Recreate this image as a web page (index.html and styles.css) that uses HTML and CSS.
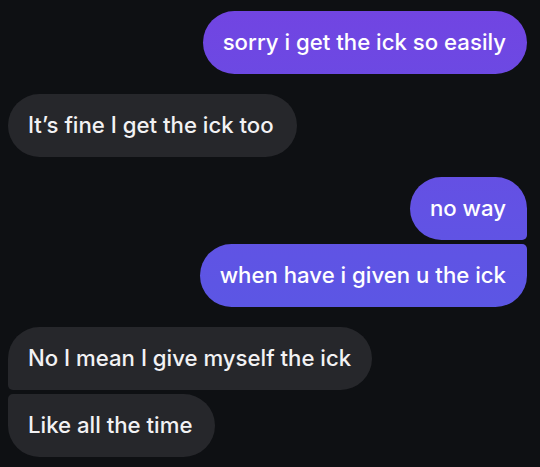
FILE: index.html
```html
<!DOCTYPE html>
<html>
<head>
<meta charset="utf-8">
<link rel="stylesheet" href="styles.css">
</head>
<body>
<div class="chat">
  <div class="group out">
    <div class="bubble">sorry i get the ick so easily</div>
  </div>
  <div class="group in">
    <div class="bubble">It’s fine I get the ick too</div>
  </div>
  <div class="group out">
    <div class="bubble first">no way</div>
    <div class="bubble last">when have i given u the ick</div>
  </div>
  <div class="group in">
    <div class="bubble first">No I mean I give myself the ick</div>
    <div class="bubble last">Like all the time</div>
  </div>
</div>
</body>
</html>
```
FILE: styles.css
```css
html, body {
  margin: 0;
  padding: 0;
  background: #0e1013;
  width: 540px;
  height: 467px;
  overflow: hidden;
}
.chat {
  display: flex;
  flex-direction: column;
  gap: 20px;
  padding: 11px 13px 0 8px;
  font-family: Inter, "Noto Sans", sans-serif;
}
.group {
  display: flex;
  flex-direction: column;
  gap: 4px;
}
.group.out { align-items: flex-end; }
.group.in { align-items: flex-start; }
.bubble {
  font-size: 22.2px;
  line-height: 27px;
  padding: 17px 21px 19px 20px;
  border-radius: 32px;
  color: #ffffff;
  font-weight: 500;
}
.out .bubble {
  background: linear-gradient(to bottom, #7244e2 0px, #6252e4 210px, #5a57e4 330px, #5a57e4 467px);
  background-attachment: fixed;
}
.in .bubble {
  background: #26272b;
  color: #f2f2f4;
  padding-right: 23px;
}
.out .bubble.first { border-bottom-right-radius: 5px; }
.out .bubble.last { border-top-right-radius: 5px; }
.in .bubble.first { border-bottom-left-radius: 5px; padding-right: 21px; }
.in .bubble.last { border-top-left-radius: 5px; }
```
